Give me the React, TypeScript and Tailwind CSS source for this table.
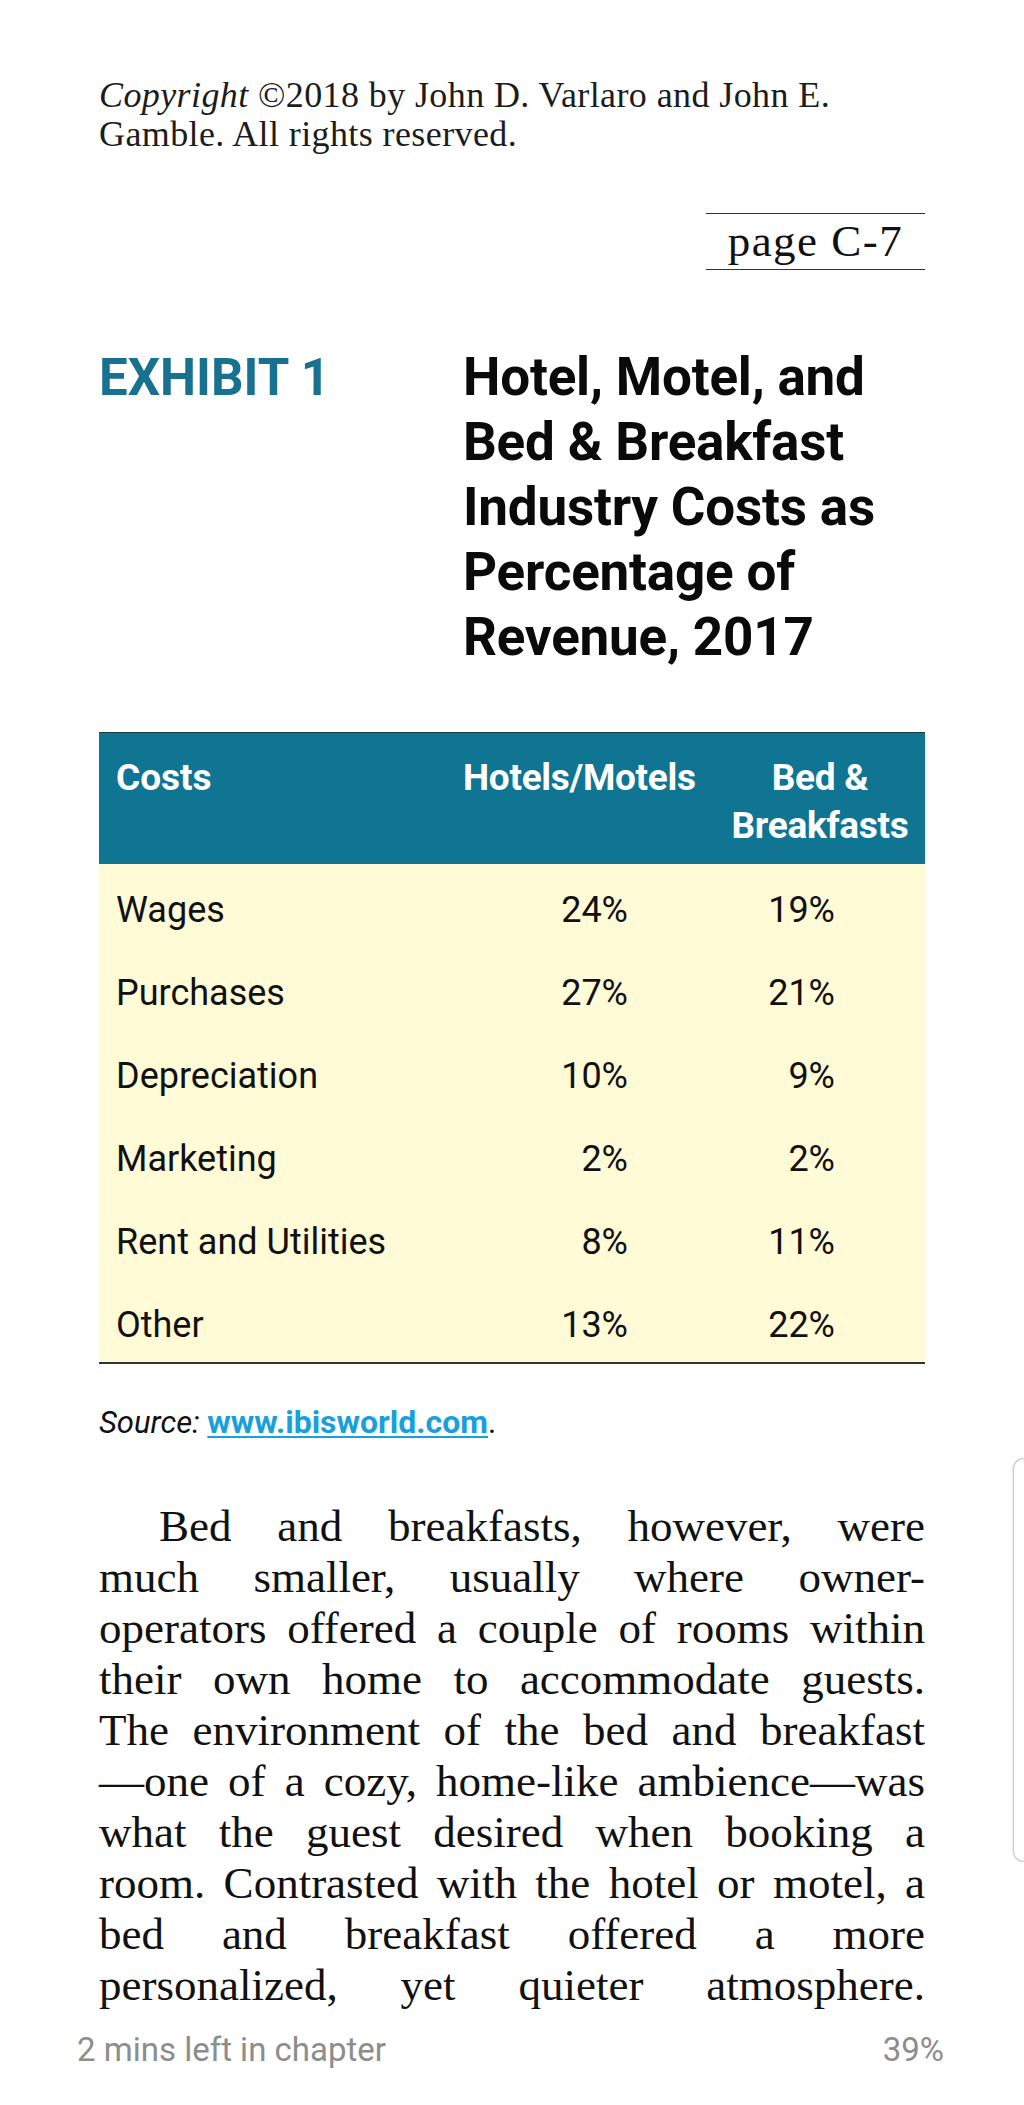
import React from "react";

const bodyLines = [
  "Bed and breakfasts, however, were",
  "much smaller, usually where owner-",
  "operators offered a couple of rooms within",
  "their own home to accommodate guests.",
  "The environment of the bed and breakfast",
  "\u2014one of a cozy, home-like ambience\u2014was",
  "what the guest desired when booking a",
  "room. Contrasted with the hotel or motel, a",
  "bed and breakfast offered a more",
  "personalized, yet quieter atmosphere.",
];

const rows: [string, string, string][] = [
  ["Wages", "24%", "19%"],
  ["Purchases", "27%", "21%"],
  ["Depreciation", "10%", "9%"],
  ["Marketing", "2%", "2%"],
  ["Rent and Utilities", "8%", "11%"],
  ["Other", "13%", "22%"],
];

export default function App() {
  return (
    <div className="relative w-[1024px] h-[2105px] bg-white overflow-hidden">
      <div className="pl-[99px] w-[925px] pt-[76px]">
        {/* Copyright */}
        <p className="font-['Liberation_Serif',serif] text-[36px] leading-[39px] tracking-[0.4px] text-[#1c1c1c]">
          <span className="italic">Copyright</span> ©2018 by John D. Varlaro and John E.
          <br />
          Gamble. All rights reserved.
        </p>

        {/* page marker */}
        <div className="flex justify-end mt-[59px]">
          <div className="w-[219px] border-t border-b border-[#333] text-center font-['Liberation_Serif',serif] text-[45px] leading-[55px] tracking-[1.5px] text-[#111]">
            page C-7
          </div>
        </div>

        {/* Exhibit heading */}
        <div className="flex mt-[75px] font-['Roboto',sans-serif] font-bold leading-[65px]">
          <div className="w-[364px] text-[51px] text-[#17718f]">EXHIBIT 1</div>
          <div className="text-[53px] text-[#0a0a0a] tracking-[-0.2px]">
            Hotel, Motel, and
            <br />
            Bed &amp; Breakfast
            <br />
            Industry Costs as
            <br />
            Percentage of
            <br />
            Revenue, 2017
          </div>
        </div>

        {/* Table */}
        <div className="mt-[62px] w-[826px] font-['Roboto',sans-serif]">
          <div className="grid grid-cols-[351px_265px_210px] bg-[#0f7592] border-t border-[#1d3b44] text-white font-bold text-[37px] leading-[48px] pt-[21px] pb-[14px] h-[132px]">
            <div className="pl-[17px]">Costs</div>
            <div className="pl-[13px] tracking-[-0.3px]">Hotels/Motels</div>
            <div className="text-center tracking-[-0.3px]">
              Bed &amp;
              <br />
              Breakfasts
            </div>
          </div>
          <div className="bg-[#fffbd7] border-b-[2px] border-[#333] text-[36px] text-[#111]">
            {rows.map(([a, b, c]) => (
              <div
                key={a}
                className="grid grid-cols-[351px_265px_210px] h-[83px] pt-[25px] leading-[42px]"
              >
                <div className="pl-[17px]">{a}</div>
                <div className="text-right pr-[87px]">{b}</div>
                <div className="text-right pr-[90px]">{c}</div>
              </div>
            ))}
          </div>
        </div>

        {/* Source */}
        <p className="mt-[40px] font-['Roboto',sans-serif] text-[31px] leading-[36px] text-[#111]">
          <span className="italic">Source:</span>{" "}
          <span className="font-bold text-[32px] text-[#1a9fdd] underline decoration-[2px] underline-offset-[3px]">
            www.ibisworld.com
          </span>
          .
        </p>

        {/* Body */}
        <div className="mt-[60px] w-[826px] font-['Liberation_Serif',serif] text-[45px] leading-[51px] text-[#111]">
          {bodyLines.map((l, i) => (
            <div
              key={i}
              className={`text-justify [text-align-last:justify] ${i === 0 ? "indent-[60px]" : ""}`}
            >
              {l}
            </div>
          ))}
        </div>
      </div>

      {/* Footer */}
      <div className="mt-[20px] ml-[77px] w-[867px] flex justify-between font-['Roboto',sans-serif] text-[33px] leading-[38px] text-[#8d8d8d]">
        <span>2 mins left in chapter</span>
        <span>39%</span>
      </div>

      {/* Edge handle */}
      <div className="absolute right-0 top-[1458px] w-[11px] h-[404px] border border-r-0 border-[#c8c8c8] rounded-l-[14px] bg-white shadow-[-1px_0_3px_rgba(0,0,0,0.08)]" />
    </div>
  );
}
